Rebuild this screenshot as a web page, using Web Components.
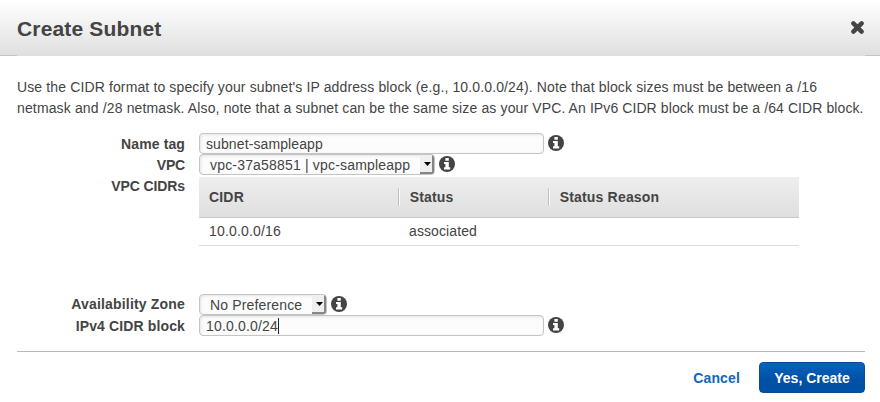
<!DOCTYPE html>
<html lang="en">
<head>
<meta charset="utf-8">
<title>Create Subnet</title>
<style>
html,body{margin:0;background:#fff}
body{width:880px;height:402px;overflow:hidden;font:14px/21px "Liberation Sans",Arial,sans-serif;color:#444}
</style>
</head>
<body>
<subnet-dialog></subnet-dialog>
<script>
const define = (name, html) => {
  const template = document.createElement('template');
  template.innerHTML = html;
  customElements.define(name, class extends HTMLElement {
    constructor() {
      super();
      this.attachShadow({mode: 'open'}).append(template.content.cloneNode(true));
    }
  });
};

define('info-icon', `
<style>:host{display:block;width:16px;height:16px;flex:none;margin-top:2px}svg{display:block}</style>
<svg width="16" height="16" viewBox="0 0 16 16"><circle cx="8" cy="8" r="8" fill="#444"/><path fill="#fff" d="M6.4 2h3.4v2.8H6.4zM5 6h4.8v5.2H11.2V13.4H5v-2.2h1.4V8H5z"/></svg>`);

define('dialog-header', `
<style>
:host{display:flex;height:56px;box-sizing:border-box;padding:2px 16px 0 17px;justify-content:space-between;background:linear-gradient(#fff,#dfdfdf);position:relative}
:host::before,:host::after{content:"";position:absolute;bottom:0;height:1px;background:#c4c4c4}
:host::before{left:0;width:17px}:host::after{right:0;width:15px}
h1{font-size:21px;line-height:54px;margin:0;font-weight:bold;letter-spacing:.16px}
svg{margin-top:19px;display:block}
</style>
<h1><slot></slot></h1>
<svg width="13" height="13" viewBox="0 0 13 13"><path d="M2.4 2.4l8.2 8.2M10.6 2.4l-8.2 8.2" stroke="#444" stroke-width="4.4" stroke-linecap="round"/></svg>`);

define('form-row', `
<style>
:host{display:flex;height:var(--row,21px);align-items:flex-start}
.label{width:185px;margin-right:14px;padding-top:var(--drop,1px);text-align:right;font-weight:bold;line-height:21px;white-space:nowrap;flex:none}
.field{display:flex;flex:none}
::slotted(info-icon){margin-left:4px}
</style>
<div class="label"><slot name="label"></slot></div><div class="field"><slot></slot></div>`);

define('text-field', `
<style>
:host{display:flex;box-sizing:border-box;width:345px;height:21px;border:1px solid #c4c4c4;border-radius:4px;padding:0 6px;background:#fcfcfc;box-shadow:inset 1px 1px 3px #e4e4e4;line-height:20px;white-space:pre}
:host([focused])::after{content:"";width:1px;height:16px;margin-top:2px;background:#222}
</style><slot></slot>`);

define('select-field', `
<style>
:host{display:flex;justify-content:space-between;box-sizing:border-box;height:21px;border:1px solid #c4c4c4;border-radius:4px;padding-left:10px;background:#fcfcfc;box-shadow:inset 1px 1px 3px #e4e4e4;line-height:20px;white-space:nowrap;overflow:hidden}
i{box-sizing:border-box;width:14px;height:19px;background:#efefef;border-right:2px solid #858585;border-bottom:2px solid #858585;display:flex;align-items:flex-start;justify-content:center}
svg{display:block;margin:7px 0 0 2px}
</style><slot></slot><i><svg width="7" height="4"><path d="M0 0h7L3.5 4z" fill="#000"/></svg></i>`);

define('cidr-table', `
<style>
:host{display:block;width:600px}
.head,.body{display:grid;grid-template-columns:199px 150px 251px;box-sizing:border-box}
.head{height:41px;background:linear-gradient(#eee,#dfdfdf);border-bottom:1px solid #c8c8c8;font-weight:bold;align-items:center;letter-spacing:.18px}
.head span{height:18px;line-height:18px;padding-left:10px}
.head span+span{padding-left:10.7px;border-left:1px solid #c0c0c0;box-shadow:inset 1px 0 #fafafa}
.body{height:28px;border-bottom:1px solid #ddd;line-height:27px}
.body span{padding-left:10px;letter-spacing:.18px}.body span+span{padding-left:11px;letter-spacing:.1px}
</style>
<div class="head"><span>CIDR</span><span>Status</span><span>Status Reason</span></div>
<div class="body"><span>10.0.0.0/16</span><span>associated</span><span></span></div>`);

define('dialog-footer', `
<style>
:host{display:flex;justify-content:flex-end;align-items:flex-start;margin:15px 15px 0 17px;border-top:1px solid #b9b9b9;padding-top:10px;font-weight:bold;line-height:33px}
a{color:#1166bb;margin-right:19px;letter-spacing:.14px}
button{box-sizing:border-box;width:106px;height:31px;padding:1px 0 0;border:1px solid #0a4a94;border-radius:4px;background:linear-gradient(#0763bd,#0050a5 60%);color:#fff;font:bold 14px/28px "Liberation Sans",Arial,sans-serif}
</style><a>Cancel</a><button>Yes, Create</button>`);

define('subnet-dialog', `
<style>
:host{display:block;height:402px;background:#fff}
p{margin:21px 0 14px 17px;white-space:nowrap;letter-spacing:.13px}
</style>
<dialog-header>Create Subnet</dialog-header>
<p>Use the CIDR format to specify your subnet's IP address block (e.g., 10.0.0.0/24). Note that block sizes must be between a /16<br><span style="letter-spacing:.14px">netmask and /28 netmask. Also, note that a subnet can be the same size as your </span><span style="letter-spacing:.09px">VPC. An IPv6 CIDR block must be a /64 CIDR block.</span></p>
<form-row><span slot="label" style="letter-spacing:.12px">Name tag</span><text-field style="letter-spacing:.1px">subnet-sampleapp</text-field><info-icon></info-icon></form-row>
<form-row><span slot="label" style="letter-spacing:-.2px">VPC</span><select-field style="width:236px;letter-spacing:.18px">vpc-37a58851 | vpc-sampleapp</select-field><info-icon></info-icon></form-row>
<form-row style="--row:119px"><span slot="label" style="letter-spacing:-.1px">VPC CIDRs</span><cidr-table style="margin-top:2px"></cidr-table></form-row>
<form-row style="--drop:0px"><span slot="label" style="letter-spacing:.18px">Availability Zone</span><select-field style="width:128px;letter-spacing:.15px">No Preference</select-field><info-icon></info-icon></form-row>
<form-row><span slot="label" style="letter-spacing:.13px">IPv4 CIDR block</span><text-field focused style="letter-spacing:.18px">10.0.0.0/24</text-field><info-icon></info-icon></form-row>
<dialog-footer></dialog-footer>`);
</script>
</body>
</html>
